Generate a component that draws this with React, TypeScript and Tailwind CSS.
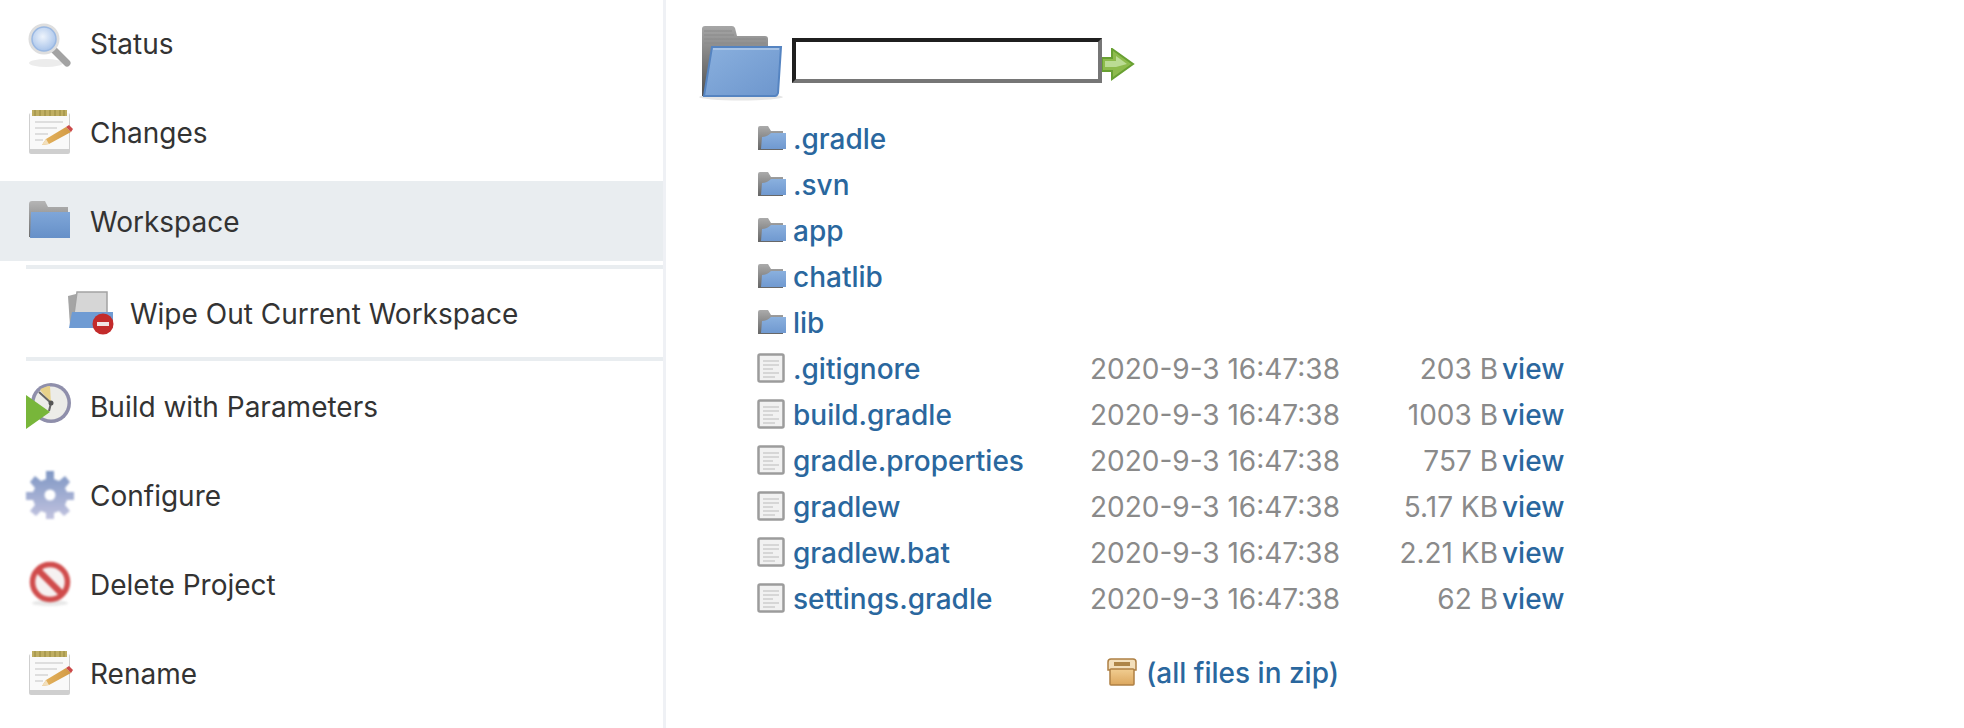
import type { ReactNode } from 'react'

function SearchIcon() {
  return (
    <svg width="48" height="52" viewBox="0 0 48 52" className="blur-[0.7px] shrink-0">
      <defs>
        <radialGradient id="lens" cx="45%" cy="40%" r="60%">
          <stop offset="0" stopColor="#eef4fc" />
          <stop offset="1" stopColor="#a9c4ea" />
        </radialGradient>
      </defs>
      <ellipse cx="20" cy="46" rx="17" ry="4" fill="#ececec" />
      <path d="M27 32 L41 46" stroke="#a3a3a3" strokeWidth="7" strokeLinecap="round" />
      <circle cx="18" cy="22" r="15.5" fill="#dedede" />
      <circle cx="18" cy="22" r="12" fill="url(#lens)" stroke="#9ab8e2" strokeWidth="1.5" />
    </svg>
  )
}

function NotepadIcon({ id }: { id: string }) {
  return (
    <svg width="48" height="48" viewBox="0 0 48 48" className="blur-[0.7px] shrink-0">
      <defs>
        <linearGradient id={id} x1="0" y1="0" x2="1" y2="0">
          <stop offset="0" stopColor="#e5b45f" />
          <stop offset="1" stopColor="#d29a45" />
        </linearGradient>
      </defs>
      <rect x="3" y="5" width="41" height="41" rx="2" fill="#cfcfcf" />
      <rect x="4" y="5" width="39" height="36" fill="#f9f9f9" />
      <rect x="6" y="2" width="35" height="6" fill="#bfae62" />
      <path d="M9 2v6M14 2v6M19 2v6M24 2v6M29 2v6M34 2v6M38 2v6" stroke="#96883f" strokeWidth="1" />
      <path d="M9 14h28M9 20h22M9 26h13M9 32h8" stroke="#dedede" strokeWidth="2" />
      <path d="M16 37 L20 31 L40 19 L45 24 L23 36 Z" fill={`url(#${id})`} />
      <path d="M16 37 L20 31 L23 36 Z" fill="#f2dfbc" />
      <path d="M40 19 L45 24 L47 21 L43 17 Z" fill="#cc4a4a" />
    </svg>
  )
}

function SideFolderIcon() {
  return (
    <svg width="48" height="44" viewBox="0 0 48 44" className="blur-[0.7px] shrink-0">
      <defs>
        <linearGradient id="sideFront" x1="0" y1="0" x2="0" y2="1">
          <stop offset="0" stopColor="#7fa6d8" />
          <stop offset="1" stopColor="#6690c8" />
        </linearGradient>
        <linearGradient id="sideBack" x1="0" y1="0" x2="0" y2="1">
          <stop offset="0" stopColor="#b5b5b5" />
          <stop offset="1" stopColor="#6e6e6e" />
        </linearGradient>
      </defs>
      <path d="M3 5 q0-3 3-3 h13 l3 6 h20 v30 H3 Z" fill="url(#sideBack)" />
      <path d="M5 13 H44 V39 H4 Z" fill="url(#sideFront)" />
    </svg>
  )
}

function WipeIcon() {
  return (
    <svg width="48" height="46" viewBox="0 0 48 46" className="blur-[0.6px] shrink-0">
      <path d="M2 6 l8-2 v30 l-6 2 Z" fill="#a5a5a5" />
      <path d="M11 2 h30 v22 H8 Z" fill="#d6d6d6" stroke="#a3a3a3" strokeWidth="1.5" />
      <path d="M6 22 h41 v16 H3 Z" fill="#6f9bd3" />
      <circle cx="37" cy="34" r="10.5" fill="#c32b2b" />
      <rect x="31" y="32" width="12" height="4" fill="#f1e4e4" />
    </svg>
  )
}

function BuildIcon() {
  return (
    <svg width="48" height="48" viewBox="0 0 48 48" className="blur-[0.6px] shrink-0">
      <circle cx="25" cy="21" r="20" fill="#8f8fab" />
      <circle cx="25" cy="21" r="16.5" fill="#ecece8" />
      <path d="M25 21 L14 8 A17 17 0 0 1 24 4 Z" fill="#e8d28a" />
      <path d="M25 21 L13 10" stroke="#666" strokeWidth="2" />
      <path d="M25 21 L23 29" stroke="#666" strokeWidth="2" />
      <circle cx="25" cy="21" r="2.5" fill="#555" />
      <path d="M0 13 L24 30 L0 47 Z" fill="#78b63a" />
    </svg>
  )
}

function GearIcon() {
  return (
    <svg width="48" height="48" viewBox="0 0 48 48" className="blur-[0.9px] shrink-0">
      <defs>
        <linearGradient id="gearFill" x1="0" y1="0" x2="0" y2="1">
          <stop offset="0" stopColor="#7f97c4" />
          <stop offset="1" stopColor="#c3c4e0" />
        </linearGradient>
      </defs>
      <path
        d="M20 0h8v8l5 2 6-5 5 6-5 6 2 4h7v8h-7l-2 5 5 6-6 5-5-5-5 2v7h-8v-7l-5-2-5 5-6-5 5-6-2-5H0v-8h7l2-4-5-6 5-6 6 5 5-2Z"
        fill="url(#gearFill)"
      />
      <circle cx="24" cy="24" r="5.5" fill="#ffffff" />
    </svg>
  )
}

function DeleteIcon() {
  return (
    <svg width="48" height="46" viewBox="0 0 48 46" className="blur-[0.8px] shrink-0">
      <ellipse cx="24" cy="42" rx="18" ry="3" fill="#e8e8e8" />
      <circle cx="24" cy="21" r="17.5" fill="#f6f1f1" stroke="#d04c4c" strokeWidth="5.5" />
      <path d="M12 9 L36 33" stroke="#d04c4c" strokeWidth="6.5" />
    </svg>
  )
}

function BigFolder() {
  return (
    <svg width="85" height="76" viewBox="0 0 85 76" className="blur-[0.5px] shrink-0">
      <defs>
        <linearGradient id="bigBack" x1="0" y1="0" x2="0" y2="1">
          <stop offset="0" stopColor="#a6a6a6" />
          <stop offset="1" stopColor="#505050" />
        </linearGradient>
        <linearGradient id="bigFront" x1="0" y1="0" x2="1" y2="1">
          <stop offset="0" stopColor="#8ab0de" />
          <stop offset="1" stopColor="#6d96cd" />
        </linearGradient>
      </defs>
      <ellipse cx="43" cy="71" rx="42" ry="3.5" fill="#e6e6e6" />
      <path d="M4 3 q0-3 3-3 h27 q2 0 3 2 l2 8 h28 q3 0 3 3 v20 L6 70 H4 Z" fill="url(#bigBack)" />
      <path d="M6 5h28M6 9h30M6 13h62M6 17h62" stroke="#8a8a8a" strokeWidth="1" />
      <path d="M14 21 H83 L80 67 q-1 3-3 3 H6 Z" fill="url(#bigFront)" stroke="#5584c1" strokeWidth="2" />
      <path d="M15 23 H81" stroke="#b5cdea" strokeWidth="1.5" />
    </svg>
  )
}

function GoArrow() {
  return (
    <svg width="33" height="33" viewBox="0 0 33 33" className="blur-[0.5px] shrink-0">
      <path d="M0 10 H10 V1 L31 16 L10 31 V23 H0 Z" fill="#8dbb4c" stroke="#68a032" strokeWidth="2" />
      <path d="M3 13 H14 V8 L25 16 L14 19 H3 Z" fill="#bbdc94" />
    </svg>
  )
}

function SmallFolder() {
  return (
    <svg width="30" height="26" viewBox="0 0 30 26" className="blur-[0.6px] shrink-0">
      <defs>
        <linearGradient id="smallBack" x1="0" y1="0" x2="0" y2="1">
          <stop offset="0" stopColor="#ababab" />
          <stop offset="1" stopColor="#666666" />
        </linearGradient>
        <linearGradient id="smallFront" x1="0" y1="0" x2="0" y2="1">
          <stop offset="0" stopColor="#8ab0de" />
          <stop offset="1" stopColor="#7099d0" />
        </linearGradient>
      </defs>
      <path d="M1 3 q0-2 2-2 h8 l3 5 h12 v19 H1 Z" fill="url(#smallBack)" />
      <path d="M5 12 q5 0 9-4 H29 V24 H4 Z" fill="url(#smallFront)" />
    </svg>
  )
}

function FileIcon() {
  return (
    <svg width="28" height="30" viewBox="0 0 28 30" className="blur-[0.5px] shrink-0">
      <rect x="1.5" y="1.5" width="25" height="27" rx="1.5" fill="#f1f1f1" stroke="#9c9c9c" strokeWidth="2.5" />
      <path d="M6 8h16M6 12h16M6 16h10M6 20h16M6 24h12" stroke="#d6d6d6" strokeWidth="2" />
    </svg>
  )
}

function ZipIcon() {
  return (
    <svg width="30" height="28" viewBox="0 0 30 28" className="blur-[0.5px] shrink-0">
      <defs>
        <linearGradient id="zipBody" x1="0" y1="0" x2="0" y2="1">
          <stop offset="0" stopColor="#f1cd91" />
          <stop offset="1" stopColor="#dca75e" />
        </linearGradient>
      </defs>
      <path d="M1 4 q0-3 3-3 h22 q3 0 3 3 v8 H1 Z" fill="#f3dfbb" stroke="#ae8044" strokeWidth="1.5" />
      <rect x="7" y="4" width="16" height="4" fill="#ae8548" />
      <rect x="3" y="11" width="24" height="16" rx="1" fill="url(#zipBody)" stroke="#ae8044" strokeWidth="1.5" />
    </svg>
  )
}

const sideItems: { label: string; icon: ReactNode }[] = [
  { label: 'Status', icon: <SearchIcon /> },
  { label: 'Changes', icon: <NotepadIcon id="penA" /> },
  { label: 'Workspace', icon: <SideFolderIcon /> }
]

const lowerItems: { label: string; icon: ReactNode }[] = [
  { label: 'Build with Parameters', icon: <BuildIcon /> },
  { label: 'Configure', icon: <GearIcon /> },
  { label: 'Delete Project', icon: <DeleteIcon /> },
  { label: 'Rename', icon: <NotepadIcon id="penB" /> }
]

const folders = ['.gradle', '.svn', 'app', 'chatlib', 'lib']

const files = [
  { name: '.gitignore', size: '203 B' },
  { name: 'build.gradle', size: '1003 B' },
  { name: 'gradle.properties', size: '757 B' },
  { name: 'gradlew', size: '5.17 KB' },
  { name: 'gradlew.bat', size: '2.21 KB' },
  { name: 'settings.gradle', size: '62 B' }
]

function SideRow({ label, icon, active }: { label: string; icon: ReactNode; active?: boolean }) {
  return (
    <div className={`flex h-[80px] items-center gap-4 pl-[26px] mb-[9px] ${active ? 'bg-[#e9edf0]' : ''}`}>
      <span className="flex w-[48px] justify-center">{icon}</span>
      <span className="pt-[2px]">{label}</span>
    </div>
  )
}

export default function App() {
  return (
    <div className="flex h-[728px] overflow-hidden bg-white text-[28px] text-[#333333] font-['Inter',sans-serif]">
      <aside className="w-[666px] shrink-0 border-r-[3px] border-[#eff1f5] pt-[3px]">
        {sideItems.map((item) => (
          <SideRow key={item.label} {...item} active={item.label === 'Workspace'} />
        ))}
        <div className="-mt-[5px] ml-[26px] flex h-[96px] items-center gap-4 border-y-4 border-[#e9edf0] pl-[40px]">
          <WipeIcon />
          <span className="pt-[2px]">Wipe Out Current Workspace</span>
        </div>
        <div className="pt-[5px]">
          {lowerItems.map((item) => (
            <SideRow key={item.label} {...item} />
          ))}
        </div>
      </aside>

      <main className="flex-1 pl-[32px] pt-[26px]">
        <div className="flex h-[72px]">
          <BigFolder />
          <div className="ml-[9px] mt-[12px] h-[45px] w-[310px] border-4 border-t-[#1f1f1f] border-l-[#1f1f1f] border-r-[#767676] border-b-[#767676]" />
          <div className="mt-[22px]">
            <GoArrow />
          </div>
        </div>

        <div className="mt-[17px] ml-[59px] grid grid-cols-[333px_249px_159px_auto] auto-rows-[46px] items-center">
          {folders.map((name) => (
            <div key={name} className="col-span-4 flex items-center gap-[6px] font-medium text-[#2a679e]">
              <SmallFolder />
              <span className="pt-[2px]">{name}</span>
            </div>
          ))}
          {files.map((file) => (
            <div key={file.name} className="contents">
              <div className="flex items-center gap-[8px] font-medium text-[#2a679e]">
                <FileIcon />
                <span className="pt-[2px]">{file.name}</span>
              </div>
              <div className="whitespace-nowrap pt-[2px] text-[#8a8a8a]">2020-9-3 16:47:38</div>
              <div className="pt-[2px] text-right text-[#8a8a8a]">{file.size}</div>
              <div className="pl-[4px] pt-[2px] font-medium text-[#2a679e]">view</div>
            </div>
          ))}
        </div>

        <div className="mt-[28px] ml-[409px] flex h-[46px] items-center gap-[9px] font-medium text-[#2a679e]">
          <ZipIcon />
          <span className="pt-[2px]">(all files in zip)</span>
        </div>
      </main>
    </div>
  )
}
